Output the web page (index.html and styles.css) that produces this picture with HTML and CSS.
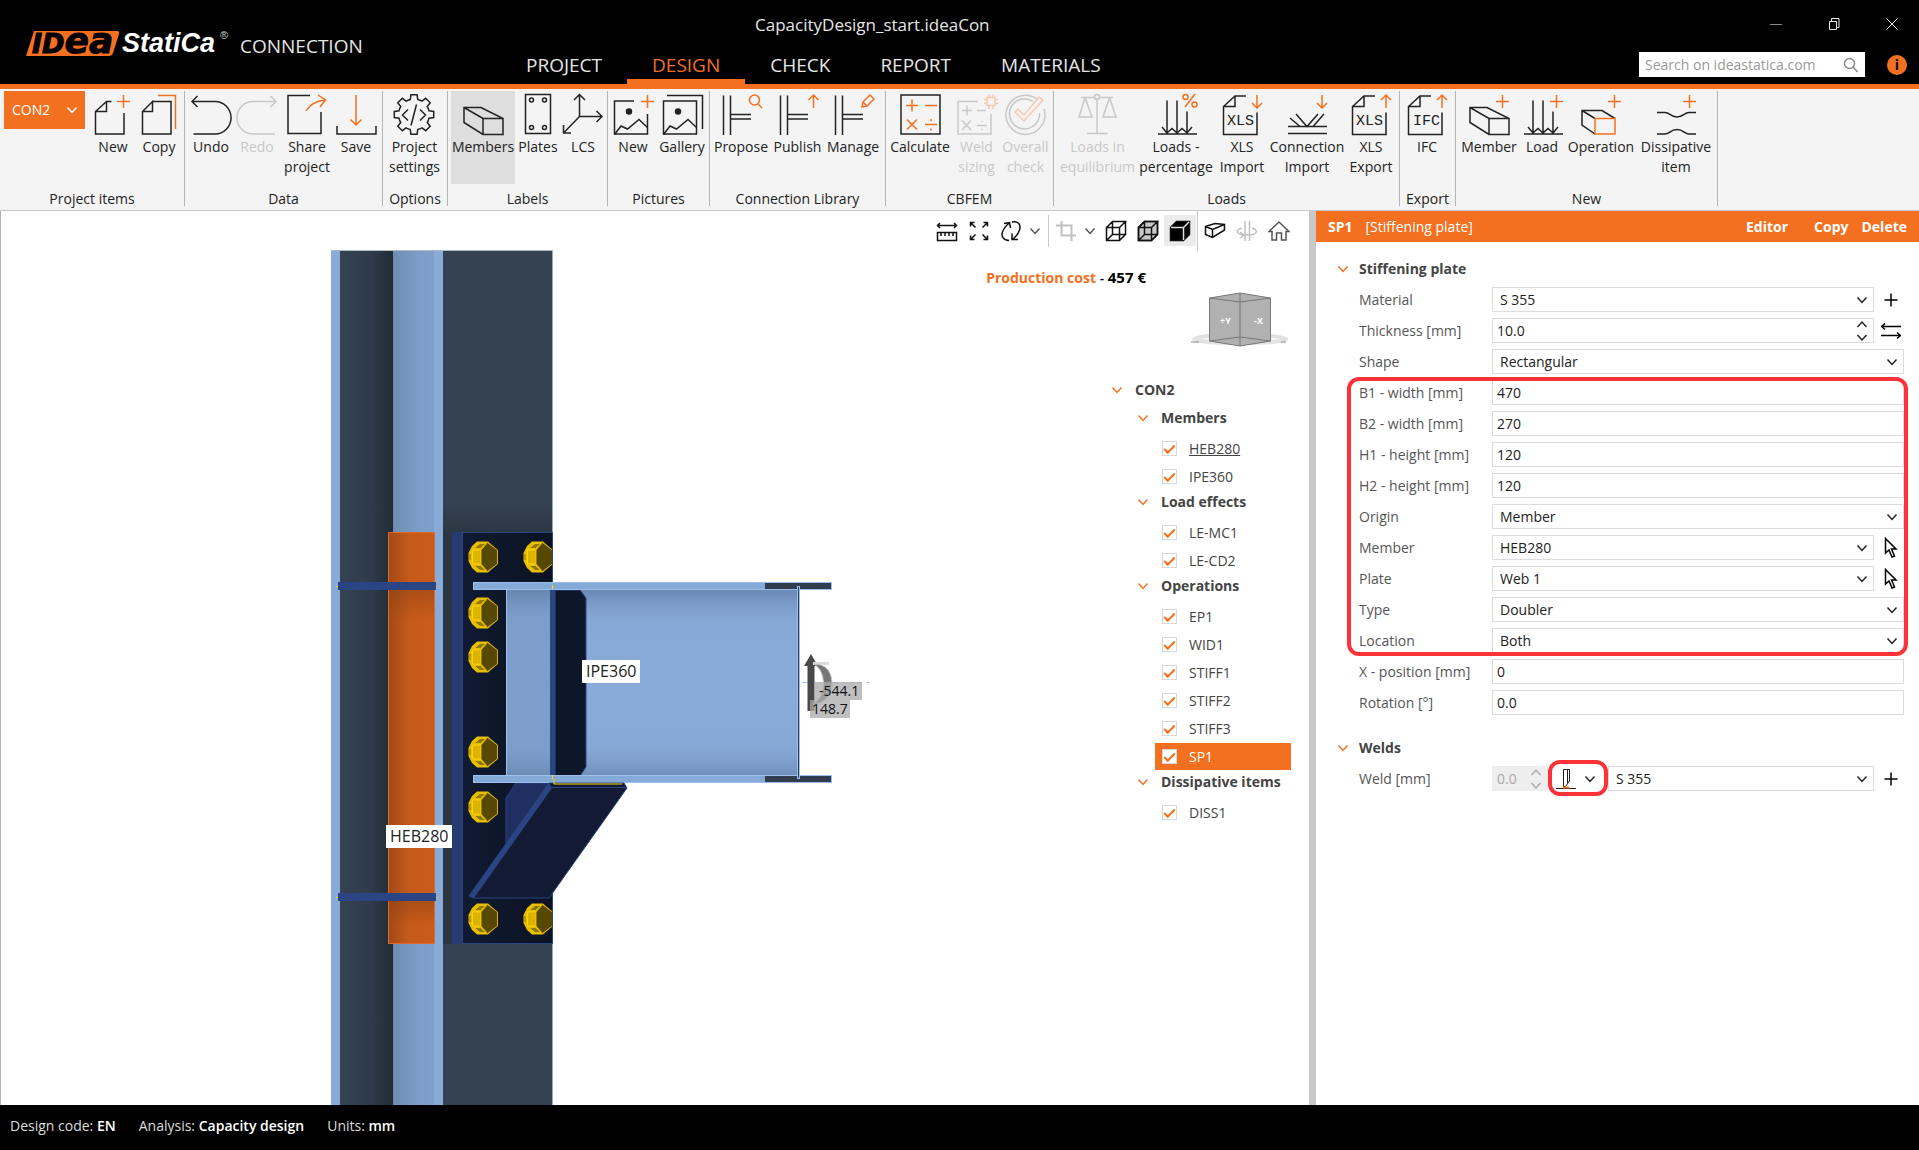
FILE: index.html
```html
<!DOCTYPE html>
<html lang="en">
<head>
<meta charset="utf-8">
<title>CapacityDesign_start.ideaCon</title>
<link rel="stylesheet" href="styles.css">
</head>
<body>
<svg class="defs" aria-hidden="true">
  <defs>
    <symbol id="chev" viewBox="0 0 12 12"><path d="M1.500 3.500L6 8.500L10.500 3.500"/></symbol>
    <symbol id="plus" viewBox="0 0 14 14"><path d="M7 0.500V13.500M0.500 7H13.500"/></symbol>
    <symbol id="spin" viewBox="0 0 12 22"><path d="M1.500 7L6 2L10.500 7M1.500 15L6 20L10.500 15"/></symbol>
    <symbol id="pointer" viewBox="0 0 14 22"><path d="M1.500 1.500V16L5 13L8 20L10.500 19L7.500 12H12Z"/></symbol>
    <symbol id="page" viewBox="0 0 44 44"><path d="M26 3.500H15L3.500 14V42H37V20M15 3.500V14H3.500"/></symbol>
    <symbol id="beam" viewBox="0 0 44 44"><path d="M3 15H20L42 26V42H22L3 30ZM3 15L22 26H42M22 26V42"/></symbol>
    <symbol id="joint" viewBox="0 0 44 44"><path d="M4.500 3V42.500M11.500 3V42.500M11.500 22H32M11.500 26.500H32"/></symbol>
    <symbol id="loads" viewBox="0 0 44 44"><path d="M13 8V40M23 8V40M33 19V40M4 41.500H43M8 34.500L13 40.500L18 36L23 40.500L28 36L33 40.500L38 34.500"/></symbol>
    <symbol id="picture" viewBox="0 0 44 44"><path d="M3.500 42L10 33.500L16.500 36.500L28 27L36.500 35"/><circle cx="18" cy="19" r="2.500" fill="currentColor"/></symbol>
    <symbol id="wirecube" viewBox="0 0 22 22"><path d="M1.500 7.500H14.500V20.500H1.500ZM1.500 7.500L7.500 1.500H20.500L14.500 7.500M20.500 1.500V14.500L14.500 20.500M7.500 1.500V14.500H20.500M7.500 14.500L1.500 20.500"/></symbol>
    <symbol id="bolt" viewBox="0 0 30 32">
      <path d="M9 0.500H20L29.500 9V23L20 31.500H9L4 27L0.500 20V12L4 5Z" fill="#e8c000"/>
      <path d="M4.500 9H12.500V23H4.500Z" fill="#dcb400" stroke="#ffd500"/>
      <path d="M13 9L19.500 1.500L29.500 9V23L19.500 30.500L13 23Z" fill="#574800" stroke="#d8ae00"/>
      <path d="M6 7.500L12 2.500H18L12.500 7.500ZM6 24.500L12 29.500H18L12.500 24.500Z" fill="#927700" stroke="#e3bd00"/>
      <path d="M2 13V19" stroke="#927700"/>
    </symbol>
    <linearGradient id="g-dark"><stop offset="0" stop-color="#354252"/><stop offset=".6" stop-color="#2f3b4a"/><stop offset="1" stop-color="#212b36"/></linearGradient>
    <linearGradient id="g-web"><stop offset="0" stop-color="#6f8db3"/><stop offset=".6" stop-color="#7c9dc8"/><stop offset="1" stop-color="#7fa0cc"/></linearGradient>
    <linearGradient id="g-orange"><stop offset="0" stop-color="#a04a15"/><stop offset=".45" stop-color="#c65a1a"/><stop offset="1" stop-color="#cb5c1b"/></linearGradient>
    <linearGradient id="g-plate"><stop offset="0" stop-color="#101a31"/><stop offset="1" stop-color="#0c1222"/></linearGradient>
    <linearGradient id="g-shade" x2="0" y2="1"><stop offset="0" stop-color="#5f7da6" stop-opacity=".75"/><stop offset=".16" stop-color="#7b9bc7" stop-opacity=".2"/><stop offset=".5" stop-color="#88abd9" stop-opacity="0"/><stop offset=".85" stop-color="#7b9bc7" stop-opacity=".2"/><stop offset="1" stop-color="#6684ac" stop-opacity=".7"/></linearGradient>
    <linearGradient id="g-cast" x2="0" y2="1"><stop offset="0" stop-color="#2c3744" stop-opacity="0"/><stop offset="1" stop-color="#2c3744"/></linearGradient>
    <linearGradient id="g-warm" x2="0" y2="1"><stop offset="0" stop-color="#8c4012" stop-opacity=".5"/><stop offset="1" stop-color="#8c4012" stop-opacity="0"/></linearGradient>
  </defs>
</svg>

<div class="app">
  <header class="titlebar">
    <div class="brand">
      <svg class="logo" width="206" height="46" viewBox="0 0 206 46" role="img" aria-label="IDEA StatiCa">
        <path d="M8 10H91Q94 10 93 13L87 32Q86 35 83 35H0Z" fill="#f37021"/>
        <text x="6" y="32" class="logo-idea">ID<tspan class="logo-ea">ea</tspan></text>
        <text x="96" y="31" class="logo-name">StatiCa</text>
        <text x="194" y="18" class="logo-reg">®</text>
      </svg>
      <span class="product">CONNECTION</span>
    </div>
    <h1 class="doc-title">CapacityDesign_start.ideaCon</h1>
    <nav class="tabs">
      <a href="#project">PROJECT</a>
      <a href="#design" class="active">DESIGN</a>
      <a href="#check">CHECK</a>
      <a href="#report">REPORT</a>
      <a href="#materials">MATERIALS</a>
    </nav>
    <div class="window-buttons">
      <button aria-label="Minimize"><svg width="14" height="14"><path d="M1 7.500H13" stroke="#888"/></svg></button>
      <button aria-label="Restore"><svg width="14" height="14"><path d="M2.500 4.500H9.500V12.500H2.500ZM4.500 4V1.500H12V10.500H10"/></svg></button>
      <button aria-label="Close"><svg width="14" height="14"><path d="M1.500 1.500L12.500 12.500M12.500 1.500L1.500 12.500"/></svg></button>
    </div>
    <div class="help">
      <label class="search">
        <input type="text" placeholder="Search on ideastatica.com" aria-label="Search">
        <svg width="16" height="16"><circle cx="6.500" cy="6.500" r="5"/><path d="M10 10L14.500 15"/></svg>
      </label>
      <button class="info" aria-label="Information">i</button>
    </div>
  </header>

  <div class="ribbon">
    <section class="group g-items">
      <div class="tools">
        <button class="item-picker">CON2 <svg width="12" height="12"><use href="#chev"/></svg></button>
        <button class="tool"><svg><path d="M20.500 9.500H15.500L4.500 19.500V42H33V21M15.500 9.500V19.500H4.500"/><path class="o" d="M26 9.500H39M32.500 3V16"/></svg>New</button>
        <button class="tool"><svg><path d="M15.500 9.500H34V42H5.500V19.500L15.500 9.500V19.500H5.500"/><path class="o" d="M21 3.500H38.500V37"/></svg>Copy</button>
      </div>
      <h2>Project items</h2>
    </section>
    <section class="group g-data">
      <div class="tools">
        <button class="tool"><svg><path d="M3 9.500H26A16 16.200 0 0 1 26 42H4.500M8.500 4L3 9.500L8.500 15"/></svg>Undo</button>
        <button class="tool" disabled><svg><path d="M41 9.500H18A16 16.200 0 0 0 18 42H40M35.500 4L41 9.500L35.500 15"/></svg>Redo</button>
        <button class="tool"><svg><path d="M25 3.500H3V41.500H36V20"/><path class="o" d="M21 19C25 12 31 9 40 8M33 3L40.500 8L35 15"/></svg>Share<br>project</button>
        <button class="tool"><svg><path d="M3 34V42H42V34"/><path class="o" d="M22 3V33M16.500 27.500L22 33L27.500 27.500"/></svg>Save</button>
      </div>
      <h2>Data</h2>
    </section>
    <section class="group g-options">
      <div class="tools">
        <button class="tool"><svg><g transform="translate(22 22.500)"><path d="M15 -3.700L19.700 -3.100V3.100L15 3.700Q14.500 6 13.300 8L16.200 11.700L11.700 16.200L8 13.300Q6 14.500 3.700 15L3.100 19.700H-3.100L-3.700 15Q-6 14.500 -8 13.300L-11.700 16.200L-16.200 11.700L-13.300 8Q-14.500 6 -15 3.700L-19.700 3.100V-3.100L-15 -3.700Q-14.500 -6 -13.300 -8L-16.200 -11.700L-11.700 -16.200L-8 -13.300Q-6 -14.500 -3.700 -15L-3.100 -19.700H3.100L3.700 -15Q6 -14.500 8 -13.300L11.700 -16.200L16.200 -11.700L13.300 -8Q14.500 -6 15 -3.700ZM-6 -5L-11.500 0.500L-6 6M6 -5L11.500 0.500L6 6M2.500 -10L-3 11"/></g></svg>Project<br>settings</button>
      </div>
      <h2>Options</h2>
    </section>
    <section class="group g-labels">
      <div class="tools">
        <button class="tool on"><svg><use href="#beam"/></svg>Members</button>
        <button class="tool"><svg><path d="M9.500 2.500H34.500V41.500H9.500Z"/><circle cx="15.500" cy="8" r="2"/><circle cx="28.500" cy="8" r="2"/><circle cx="15.500" cy="35.500" r="2"/><circle cx="28.500" cy="35.500" r="2"/></svg>Plates</button>
        <button class="tool"><svg><path d="M18.500 24.500V2.500M13 8L18.500 2.500L24 8M18.500 24.500H41M35.500 19L41 24.500L35.500 30M18.500 24.500L2.500 41M2.500 33V41H10"/></svg>LCS</button>
      </div>
      <h2>Labels</h2>
    </section>
    <section class="group g-pictures">
      <div class="tools">
        <button class="tool"><svg><use href="#picture"/><path d="M23 9H3.500V42H36.500V22"/><path class="o" d="M30 9.500H43M36.500 3V16"/></svg>New</button>
        <button class="tool"><svg><use href="#picture"/><path d="M3.500 9H36.500V42H3.500ZM7 3.500H42.500V37"/></svg>Gallery</button>
      </div>
      <h2>Pictures</h2>
    </section>
    <section class="group g-library">
      <div class="tools">
        <button class="tool"><svg><use href="#joint"/><circle class="o" cx="35.500" cy="8" r="5"/><path class="o" d="M39 12L43 16"/></svg>Propose</button>
        <button class="tool"><svg><use href="#joint"/><path class="o" d="M37.500 16V3M32.500 8L37.500 3L42.500 8"/></svg>Publish</button>
        <button class="tool"><svg><use href="#joint"/><path class="o" d="M31 15L32 10L39 3L43 7L36 14ZM32 10L36 14"/></svg>Manage</button>
      </div>
      <h2>Connection Library</h2>
    </section>
    <section class="group g-cbfem">
      <div class="tools">
        <button class="tool"><svg><path d="M3 3H42V42H3Z"/><path class="o" d="M8 13.500H20M14 7.500V19.500M27 13.500H39M9 27.500L19 37.500M19 27.500L9 37.500M27 32.500H39M33 27V29M33 36.500V38.500"/></svg>Calculate</button>
        <button class="tool" disabled><svg><path d="M23 9.500H3V42H36V22M7 18.500H17M12 13.500V23.500M22 18.500H31M7 28.500L16 38M16 28.500L7 38M22 33.500H32M27 29V30M27 37V38"/><path class="o" d="M32 5.500H40V13.500H32ZM34 2.500V5M38 2.500V5M34 14V17M38 14V17M29 7.500H32M29 11.500H32M40 7.500H43M40 11.500H43"/></svg>Weld<br>sizing</button>
        <button class="tool" disabled><svg><path d="M35 8A19.500 19.500 0 1 0 41 17M30 9.500A15 15 0 1 0 36.500 21"/><path class="o" d="M12 20L15 17L21 23L36 5L40 8L21 29Z"/></svg>Overall<br>check</button>
      </div>
      <h2>CBFEM</h2>
    </section>
    <section class="group g-loads">
      <div class="tools">
        <button class="tool" disabled><svg><path d="M22 6V41.500M12 41.500H32.500M6 5.500H20M24 5.500H38M10 5.500L4 25H17L10 5.500M34.500 5.500L28 25H41L34.500 5.500"/><circle cx="22" cy="5" r="2.500"/></svg>Loads in<br>equilibrium</button>
        <button class="tool"><svg><use href="#loads"/><path class="o" d="M41 2L31 15"/><circle class="o" cx="31.500" cy="5" r="2.500"/><circle class="o" cx="40.500" cy="12.500" r="2.500"/></svg>Loads -<br>percentage</button>
        <button class="tool"><svg><use href="#page"/><text x="7" y="33">XLS</text><path class="o" d="M37 3V16M32 11L37 16L42 11"/></svg>XLS<br>Import</button>
        <button class="tool"><svg><path d="M3 34.500H42M3 41.500H42M5 26L15 34.500M11 22L22 34.500L33 22M39 22L28 34.500"/><path class="o" d="M37 3V16M32 11L37 16L42 11"/></svg>Connection<br>Import</button>
        <button class="tool"><svg><use href="#page"/><text x="7" y="33">XLS</text><path class="o" d="M37 16V3M32 8L37 3L42 8"/></svg>XLS<br>Export</button>
      </div>
      <h2>Loads</h2>
    </section>
    <section class="group g-export">
      <div class="tools">
        <button class="tool"><svg><use href="#page"/><text x="8" y="33">IFC</text><path class="o" d="M37 16V3M32 8L37 3L42 8"/></svg>IFC</button>
      </div>
      <h2>Export</h2>
    </section>
    <section class="group g-new">
      <div class="tools">
        <button class="tool"><svg><use href="#beam"/><path class="o" d="M29 9.500H42M35.500 3V16"/></svg>Member</button>
        <button class="tool"><svg><use href="#loads"/><path class="o" d="M30 9.500H43M36.500 3V16"/></svg>Load</button>
        <button class="tool"><svg><path d="M16 42L3 33V18.500H23L36 26.500M3 18.500L16 26.500"/><path class="o" d="M16 26.500H36V42H16ZM29 9.500H42M35.500 3V16"/></svg>Operation</button>
        <button class="tool"><svg><path d="M3 20.500H11C16 20.500 16 25 23 25C30 25 30 20.500 35 20.500H42M3 42H11C16 42 16 37.500 23 37.500C30 37.500 30 42 35 42H42"/><path class="o" d="M29 9.500H42M35.500 3V16"/></svg>Dissipative<br>item</button>
      </div>
      <h2>New</h2>
    </section>
  </div>

  <main class="workspace">
    <div class="viewport">
      <svg class="scene" width="100%" height="100%">
        <g transform="translate(-1 -211)">
          <svg y="250" width="1300" height="100%">
            <rect x="331" width="222" height="100%" fill="#354252"/>
            <rect x="331" width="9" height="100%" fill="#88abd9"/>
            <rect x="340" width="53" height="100%" fill="url(#g-dark)"/>
            <rect x="393" width="42" height="100%" fill="url(#g-web)"/>
            <rect x="434" width="9" height="100%" fill="#88abd9"/>
            <path d="M552.500 0V900" stroke="#88abd9"/>
            <rect x="331" width="222" height="1" fill="#b4bac4"/>
          </svg>
          <rect x="443" y="502" width="109" height="31" fill="url(#g-cast)"/>
          <rect x="443" y="532" width="9" height="412" fill="#2b3643"/>
          <rect x="388.500" y="532.500" width="46" height="411" fill="url(#g-orange)" stroke="#e0692a"/>
          <rect x="389" y="590" width="45" height="30" fill="url(#g-warm)"/>
          <rect x="389" y="901" width="45" height="24" fill="url(#g-warm)"/>
          <path d="M336 586.500H437M336 897.500H437" stroke="#ffd500"/>
          <rect x="338" y="582" width="98" height="8" fill="#2b4484"/>
          <rect x="338" y="893" width="98" height="8" fill="#2b4484"/>
          <rect x="452" y="532" width="11" height="412" fill="#263b72"/>
          <rect x="462.500" y="532.500" width="90" height="411" fill="url(#g-plate)" stroke="#2b4484"/>
          <rect x="506" y="590" width="292" height="186" fill="#88abd9"/>
          <rect x="506" y="590" width="44" height="186" fill="#7898c2" opacity=".7"/>
          <rect x="506" y="590" width="292" height="186" fill="url(#g-shade)"/>
          <path d="M506.500 590V776" stroke="#9cc0ee"/>
          <path d="M555 590H580L586 598V767L580 776H555Z" fill="#0e162a" stroke="#2b4484"/>
          <rect x="550" y="589" width="5" height="187" fill="#2b4484"/>
          <path d="M506 798L516 783H549L506 847Z" fill="#1f2f60" stroke="#2b4484"/>
          <g fill="#86aad8" stroke="#9cc0ee">
            <rect x="473.500" y="582.500" width="358" height="7"/>
            <rect x="473.500" y="775.500" width="358" height="7"/>
          </g>
          <rect x="765" y="583" width="66" height="6" fill="#303d4e"/>
          <rect x="765" y="776" width="66" height="6" fill="#303d4e"/>
          <rect x="797.500" y="586.500" width="2" height="192" fill="#303d4e" stroke="#9cc0ee"/>
          <path d="M552 783H624L627 788L549 898H473L469 896L549 783Z" fill="#131b34" stroke="#2b4484"/>
          <path d="M549 783L552 788L474 898L469 896Z" fill="#2b4484"/>
          <path d="M552 787.500H626" stroke="#2b4484"/>
          <path d="M554 779V784H622M552.500 585V589M552.500 775V779" stroke="#ffd500"/>
          <svg width="552" height="1105">
            <use href="#bolt" x="468" y="541" width="30" height="32"/>
            <use href="#bolt" x="523" y="541" width="30" height="32"/>
            <use href="#bolt" x="468" y="597" width="30" height="32"/>
            <use href="#bolt" x="468" y="641" width="30" height="32"/>
            <use href="#bolt" x="468" y="736" width="30" height="32"/>
            <use href="#bolt" x="468" y="791" width="30" height="32"/>
            <use href="#bolt" x="468" y="903" width="30" height="32"/>
            <use href="#bolt" x="523" y="903" width="30" height="32"/>
          </svg>
          <path d="M802 682.500H873" stroke="#9cc0ee" stroke-dasharray="12 5 2 5"/>
          <path d="M807.500 711V666H804L811 654L818 666H814.500V711Z" fill="#484848"/>
          <path d="M813 662H829V665H813Z" fill="#ddd"/>
          <path d="M814 664C830 664 834 678 831 690C828 699 821 704 813 704C820 700 824 692 823.500 683C823 674 820 668 814 664Z" fill="#777" stroke="#ccc"/>
        </g>
      </svg>
      <span class="tag tag-ipe">IPE360</span>
      <span class="tag tag-heb">HEB280</span>
      <span class="value value-a">-544.1</span>
      <span class="value value-b">148.7</span>

      <div class="view-tools">
        <button aria-label="Measure"><svg width="22" height="22"><path d="M1.500 5.500H20.500M4 3L1.500 5.500L4 8M18 3L20.500 5.500L18 8M1.500 12.500H20.500V20.500H1.500ZM5 13V16M9 13V16M13 13V16M17 13V16"/></svg></button>
        <button aria-label="Zoom all"><svg width="22" height="22"><path d="M2.500 6.500V2.500H6.500M2.500 2.500L7.500 7.500M15.500 2.500H19.500V6.500M19.500 2.500L14.500 7.500M2.500 15.500V19.500H6.500M2.500 19.500L7.500 14.500M15.500 19.500H19.500V15.500M19.500 19.500L14.500 14.500"/></svg></button>
        <button aria-label="Rotate"><svg width="22" height="22"><path d="M9 20.500C3 20 1 16 2.500 12C4 8 6.500 5 9.500 3M4 3.500L9.500 2.500L10.500 8M12 2C19 1 21 5 19.500 10C18.500 13 16.500 16.500 13 19M12 13.500V19.500H18"/></svg></button>
        <button class="drop" aria-label="Rotation options"><svg width="12" height="12"><use href="#chev"/></svg></button>
        <i class="rule"></i>
        <button disabled aria-label="Clip"><svg width="22" height="22"><path d="M6.500 1V15.500H21M1 5.500H16.500V21" stroke-width="2"/></svg></button>
        <button class="drop" aria-label="Clip options"><svg width="12" height="12"><use href="#chev"/></svg></button>
        <button class="wide" aria-label="Wireframe"><svg width="22" height="22"><use href="#wirecube"/></svg></button>
        <button aria-label="Transparent"><svg width="22" height="22"><path d="M1.500 7.500L7.500 1.500H20.500V14.500L14.500 20.500H1.500Z" fill="#c8c8c8"/><use href="#wirecube"/></svg></button>
        <button class="on" aria-label="Solid"><svg width="22" height="22"><path d="M1.500 7.500L7.500 1.500H20.500V14.500L14.500 20.500H1.500Z" fill="#000"/><path d="M2 7.500H14.500V20M14.500 7.500L20 2" stroke="#ddd"/></svg></button>
        <i class="rule tall"></i>
        <button aria-label="Member view"><svg width="22" height="22"><path d="M1.500 6.500L11 3.500L20.500 4.500V10L8.500 17.500L1.500 14.500ZM1.500 6.500L8.500 9.500L20.500 4.500M8.500 9.500V17.500"/></svg></button>
        <button disabled aria-label="Mirror"><svg width="22" height="22"><path d="M9 1V21M13.500 1V21M6 8C-1 10 0 14 8 15H14C22 14 22 10 16 8M4 12L8 15L4 18"/></svg></button>
        <button aria-label="Home view"><svg width="22" height="22"><path d="M1 11.500L11 2L21 11.500H18V20H13.500V13H8.500V20H4V11.500Z" stroke="#555"/></svg></button>
      </div>
      <p class="cost"><b>Production cost</b> - <strong>457 €</strong></p>
      <svg class="nav-cube" width="102" height="56">
        <ellipse cx="51" cy="47" rx="46" ry="4" stroke="#e2e2e2" stroke-width="4"/>
        <path d="M2 50H10M92 50H97" stroke="#888"/>
        <path d="M20.500 6L51 1L81.500 6V49L51 54L20.500 49Z" fill="#b1b1b1" stroke="#777"/>
        <path d="M20.500 6L51 10L81.500 6M51 1V54M20.500 49L51 45L81.500 49" stroke="#777"/>
        <text x="31" y="32">+Y</text><text x="65" y="32">-X</text>
      </svg>

      <div class="tree">
        <div class="node root"><svg width="12" height="12"><use href="#chev"/></svg>CON2</div>
        <div class="node"><svg width="12" height="12"><use href="#chev"/></svg>Members</div>
        <label class="leaf current"><input type="checkbox" checked>HEB280</label>
        <label class="leaf"><input type="checkbox" checked>IPE360</label>
        <div class="node"><svg width="12" height="12"><use href="#chev"/></svg>Load effects</div>
        <label class="leaf"><input type="checkbox" checked>LE-MC1</label>
        <label class="leaf"><input type="checkbox" checked>LE-CD2</label>
        <div class="node"><svg width="12" height="12"><use href="#chev"/></svg>Operations</div>
        <label class="leaf"><input type="checkbox" checked>EP1</label>
        <label class="leaf"><input type="checkbox" checked>WID1</label>
        <label class="leaf"><input type="checkbox" checked>STIFF1</label>
        <label class="leaf"><input type="checkbox" checked>STIFF2</label>
        <label class="leaf"><input type="checkbox" checked>STIFF3</label>
        <label class="leaf selected"><input type="checkbox" checked>SP1</label>
        <div class="node"><svg width="12" height="12"><use href="#chev"/></svg>Dissipative items</div>
        <label class="leaf"><input type="checkbox" checked>DISS1</label>
      </div>
    </div>

    <aside class="panel">
      <header class="panel-head">
        <strong>SP1</strong><span>[Stiffening plate]</span>
        <button class="editor">Editor</button><button>Copy</button><button>Delete</button>
      </header>
      <form class="form">
        <h3><svg width="12" height="12"><use href="#chev"/></svg>Stiffening plate</h3>
        <div class="row"><label for="material">Material</label><span class="select"><select id="material"><option>S 355</option></select><svg width="12" height="12"><use href="#chev"/></svg></span><button type="button" class="side" aria-label="Add material"><svg width="14" height="14"><use href="#plus"/></svg></button></div>
        <div class="row"><label for="thickness">Thickness [mm]</label><span class="select"><input id="thickness" type="text" value="10.0"><svg width="12" height="22"><use href="#spin"/></svg></span><button type="button" class="side" aria-label="Swap side"><svg width="20" height="16"><path d="M0.500 3.500H20M4 0.500L0.500 3.500L4 6.500M0 12.500H19.500M16 9.500L19.500 12.500L16 15.500"/></svg></button></div>
        <div class="row"><label for="shape">Shape</label><span class="select full"><select id="shape"><option>Rectangular</option></select><svg width="12" height="12"><use href="#chev"/></svg></span></div>
        <div class="marked">
          <div class="row"><label for="b1">B1 - width [mm]</label><input class="full" id="b1" type="text" value="470"></div>
          <div class="row"><label for="b2">B2 - width [mm]</label><input class="full" id="b2" type="text" value="270"></div>
          <div class="row"><label for="h1">H1 - height [mm]</label><input class="full" id="h1" type="text" value="120"></div>
          <div class="row"><label for="h2">H2 - height [mm]</label><input class="full" id="h2" type="text" value="120"></div>
          <div class="row"><label for="origin">Origin</label><span class="select full"><select id="origin"><option>Member</option></select><svg width="12" height="12"><use href="#chev"/></svg></span></div>
          <div class="row"><label for="member">Member</label><span class="select"><select id="member"><option>HEB280</option></select><svg width="12" height="12"><use href="#chev"/></svg></span><button type="button" class="side" aria-label="Pick member"><svg width="14" height="22"><use href="#pointer"/></svg></button></div>
          <div class="row"><label for="plate">Plate</label><span class="select"><select id="plate"><option>Web 1</option></select><svg width="12" height="12"><use href="#chev"/></svg></span><button type="button" class="side" aria-label="Pick plate"><svg width="14" height="22"><use href="#pointer"/></svg></button></div>
          <div class="row"><label for="type">Type</label><span class="select full"><select id="type"><option>Doubler</option></select><svg width="12" height="12"><use href="#chev"/></svg></span></div>
          <div class="row"><label for="location">Location</label><span class="select full"><select id="location"><option>Both</option></select><svg width="12" height="12"><use href="#chev"/></svg></span></div>
        </div>
        <div class="row"><label for="xpos">X - position [mm]</label><input class="full" id="xpos" type="text" value="0"></div>
        <div class="row"><label for="rotation">Rotation [°]</label><input class="full" id="rotation" type="text" value="0.0"></div>
        <h3 class="second"><svg width="12" height="12"><use href="#chev"/></svg>Welds</h3>
        <div class="row"><label for="weld">Weld [mm]</label>
          <div class="weld">
            <span class="select off"><input id="weld" type="text" value="0.0" disabled><svg width="12" height="22"><use href="#spin"/></svg></span>
            <button type="button" class="weld-type" aria-label="Weld type"><svg class="fine" width="20" height="22"><path d="M7.500 1.500H13.500V13L9.500 18.500H7.500ZM11.500 2V15M0 20.500H20"/><path class="o" d="M7 19.500H13"/></svg><svg width="12" height="12"><use href="#chev"/></svg></button>
            <span class="select"><select aria-label="Weld material"><option>S 355</option></select><svg width="12" height="12"><use href="#chev"/></svg></span>
          </div>
          <button type="button" class="side" aria-label="Add weld material"><svg width="14" height="14"><use href="#plus"/></svg></button>
        </div>
      </form>
    </aside>
  </main>

  <footer class="status">
    <span>Design code: <b>EN</b></span>
    <span>Analysis: <b>Capacity design</b></span>
    <span>Units: <b>mm</b></span>
  </footer>
</div>
</body>
</html>
```
FILE: styles.css
```css
* { box-sizing: border-box; }

body {
  margin: 0;
  font: 14px/20px "Open Sans", "Noto Sans", sans-serif;
  color: #222;
  background: #fff;
}

h1, h2, h3, p { margin: 0; font-size: inherit; font-weight: 400; }
button, input, select { font: inherit; color: inherit; border: 0; border-radius: 0; margin: 0; padding: 0; background: none; }
svg { display: block; flex: none; fill: none; stroke: currentColor; stroke-width: 1.5; }
svg text { stroke: none; fill: currentColor; }
.o { stroke: #f37021; }
.defs { position: absolute; width: 0; height: 0; }

.app { display: grid; grid-template-rows: 84px auto 1fr 45px; min-height: 100vh; }

/* Title bar */
.titlebar {
  display: grid;
  grid-template-columns: 501px auto 1fr;
  grid-template-rows: 48px 36px;
  background: #000;
  color: #e6e6e6;
}
.brand { grid-row: 1 / 3; display: flex; align-items: center; gap: 8px; padding: 8px 0 0 26px; }
.logo { stroke: none; margin-bottom: 4px; overflow: visible; }
.logo .logo-idea { font: italic bold 27px "DejaVu Sans", sans-serif; fill: #000; stroke: #000; stroke-width: 1; }
.logo .logo-ea { font-size: 36px; }
.logo .logo-name { font: italic bold 27px "Liberation Sans", sans-serif; fill: #fff; }
.logo .logo-reg { font: 11px "Liberation Sans", sans-serif; fill: #ccc; }
.product { font-size: 19px; }
.doc-title { grid-column: 2; font-size: 17px; line-height: 48px; padding-top: 1px; text-align: center; justify-self: center; margin-left: 118px; }
.tabs { grid-column: 2; grid-row: 2; display: flex; font-size: 19px; }
.tabs a { padding: 0 25px; line-height: 35px; height: 36px; color: inherit; text-decoration: none; }
.tabs .active { color: #f37021; font-weight: 500; border-bottom: 5px solid #f37021; }
.window-buttons { grid-column: 3; grid-row: 1; justify-self: end; display: flex; gap: 44px; padding-right: 20px; align-items: center; }
.window-buttons svg { stroke-width: 1; }
.help { grid-column: 3; grid-row: 2; justify-self: end; display: flex; align-items: center; gap: 22px; padding-right: 12px; margin-top: -3px; }
.search { display: flex; align-items: center; width: 226px; height: 25px; background: #fff; padding: 0 6px; color: #888; }
.search input { flex: 1; min-width: 0; outline: 0; }
.search input::placeholder { color: #999; opacity: 1; }
.info { width: 20px; height: 20px; border-radius: 50%; background: #f37021; color: #000; font-weight: 700; line-height: 20px; }

/* Ribbon */
.ribbon { display: flex; border-top: 5px solid #f37021; border-bottom: 1px solid #c8c8c8; background: #f4f4f4; padding: 2px 0 4px; }
.group { display: flex; flex-direction: column; height: 115px; border-right: 1px solid #b4b4b4; }
.group h2 { text-align: center; line-height: 20px; margin-top: 5px; white-space: nowrap; }
.tools { display: grid; grid-template-rows: 93px; }
.tool { display: grid; justify-content: center; justify-items: center; align-content: start; padding-top: 1px; line-height: 20px; white-space: nowrap; }
.tool svg { width: 44px; height: 45px; }
.tool text { font: 15px "Liberation Mono", monospace; }
.tool:disabled { color: #c8c8c8; }
.tool:disabled .o { stroke: #f9c9ae; }
.tool.on { background: #dedede; }
.item-picker { display: flex; align-items: center; justify-content: space-between; height: 38px; padding: 0 7px 0 8px; margin-right: 5px; background: #f37021; color: #fff; }
.g-items .tools { grid-template-columns: 86px 46px 46px; padding: 0 2px 0 4px; }
.g-data .tools { grid-template-columns: 46px 46px 54px 44px; padding: 0 4px 0 3px; }
.g-options .tools { grid-template-columns: 59px; padding: 0 3px 0 2px; }
.g-labels .tools { grid-template-columns: 64px 46px 44px; padding: 0 2px 0 3px; }
.g-pictures .tools { grid-template-columns: 46px 52px; padding: 0 1px 0 2px; }
.g-library .tools { grid-template-columns: 60px 53px 58px; padding: 0 3px 0 1px; }
.g-cbfem .tools { grid-template-columns: 66px 47px 51px; padding: 0 2px 0 1px; }
.g-loads .tools { grid-template-columns: 77px 80px 52px 78px 50px; padding: 0 3px 0 5px; }
.g-export .tools { grid-template-columns: 50px; padding: 0 3px 0 2px; }
.g-new .tools { grid-template-columns: 62px 44px 74px 76px; padding: 0 3px 0 2px; }

/* Workspace */
.workspace { display: grid; grid-template-columns: minmax(0, 1fr) 610px; }

.viewport { position: relative; border-left: 1px solid #b4b4b4; background: #fff; overflow: hidden; }
.scene { position: absolute; inset: 0; }
.scene, .scene svg { stroke: none; stroke-width: 1; }
.tag, .value { position: absolute; white-space: nowrap; }
.tag { height: 23px; line-height: 22px; padding: 0 4px; background: #fff; font-size: 16px; }
.tag-ipe { left: 581px; top: 449px; }
.tag-heb { left: 385px; top: 614px; }
.value { height: 18px; line-height: 17px; background: rgba(170, 170, 170, 0.75); color: #111; font-size: 14px; }
.value-a { left: 814px; top: 471px; padding: 0 3px 0 4px; }
.value-b { left: 809px; top: 489px; padding: 0 2px; }

.view-tools { position: relative; display: flex; justify-content: flex-end; height: 40px; padding-right: 14px; color: #111; }
.view-tools button { display: flex; align-items: center; justify-content: center; width: 32px; height: 31px; margin-top: 4px; }
.view-tools .drop { width: 16px; color: #555; }
.view-tools .wide { margin-left: 2px; }
.view-tools button:disabled { color: #c0c0c0; }
.view-tools .on { background: #ebebeb; }
.rule { width: 1px; height: 32px; margin: 4px 1px 0 5px; background: #c8c8c8; }
.rule.tall { height: 40px; margin: 0 1px; }

.cost { position: relative; margin: 16px 163px 0 0; text-align: right; color: #111; font-weight: 600; }
.cost b { color: #f37021; font-weight: 700; }
.cost strong { font-size: 15px; font-weight: 700; color: #000; }
.nav-cube { position: relative; margin: 4px 18px 0 auto; stroke-width: 1; }
.nav-cube text { font-size: 9px; font-weight: 700; fill: #fff; }

.tree { position: relative; width: 182px; margin: 31px 18px 0 auto; color: #444; }
.node { display: flex; align-items: center; gap: 12px; height: 28px; padding: 0 0 6px 28px; font-weight: 700; white-space: nowrap; }
.node svg, h3 svg { stroke: #f37021; }
.root { padding-left: 2px; }
.leaf { display: flex; align-items: center; gap: 12px; height: 28px; margin-left: 46px; padding-left: 7px; border-bottom: 1px solid #fff; }
.current { text-decoration: underline; }
.selected { background: #f37021; color: #fff; }
.leaf input { appearance: none; display: grid; place-items: center; width: 15px; height: 15px; border: 1px solid #d8d8d8; background: #fff; }
.leaf input:checked::before { content: ""; width: 9px; height: 4px; border: solid #f37021; border-width: 0 0 2px 2px; transform: translateY(-1px) rotate(-45deg); }

/* Properties panel */
.panel { border-left: 7px solid #c8c8c8; min-width: 0; }
.panel-head { display: flex; align-items: center; height: 31px; padding: 0 12px; gap: 13px; background: #f37021; color: #fff; }
.panel-head strong { font-weight: 700; }
.panel-head button { font-weight: 700; }
.panel-head .editor { margin-left: auto; margin-right: 13px; }
.form { padding: 12px 15px 0 43px; }
.form h3 { display: flex; align-items: center; gap: 10px; height: 30px; margin-left: -22px; font-weight: 700; color: #444; }
.form .second { margin-top: 15px; }
.row { display: grid; grid-template-columns: 133px minmax(0, 1fr) 30px; align-items: center; height: 31px; }
.row label { color: #555; white-space: nowrap; }
.row input, .row select { width: 100%; height: 25px; border: 1px solid #dcdcdc; padding: 0 4px; background: #fff; outline: 0; }
.row select { appearance: none; padding: 0 7px; }
.row .full { grid-column: 2 / 4; }
.select { display: grid; align-items: center; }
.select > * { grid-area: 1 / 1; }
.select svg { justify-self: end; margin-right: 6px; pointer-events: none; }
.side { display: grid; place-items: center; margin-left: 4px; height: 25px; color: #000; }
.marked { position: relative; }
.marked::after { content: ""; position: absolute; inset: 0 -4px 0 -12px; border: 4px solid #fb3339; border-radius: 12px; pointer-events: none; }
.weld { display: grid; grid-template-columns: 56px 60px minmax(0, 1fr); align-items: center; }
.off { color: #aaa; }
.off input:disabled { background: #eee; border-color: #eee; }
.weld-type { position: relative; display: flex; align-items: center; justify-content: space-between; height: 25px; padding: 0 12px 0 8px; }
.weld-type::after { content: ""; position: absolute; inset: -6px 0 -5px; border: 4px solid #fb3339; border-radius: 12px; }
.fine { stroke-width: 1; }
.fine .o { stroke-width: 2; }

/* Status bar */
.status { display: flex; gap: 23px; padding: 0 10px; background: #000; color: #ddd; line-height: 42px; }
.status b { font-weight: 600; color: #fff; }
```
